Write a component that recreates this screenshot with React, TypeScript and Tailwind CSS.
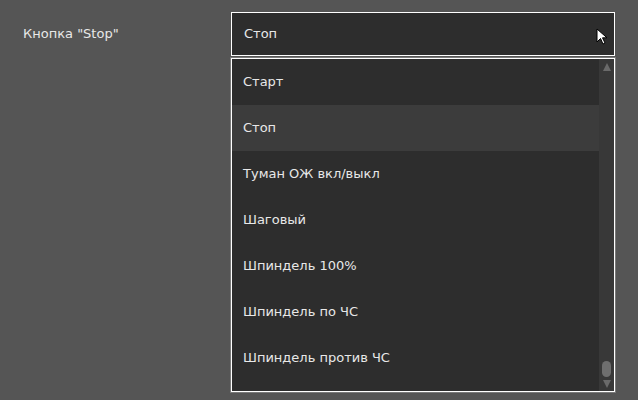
const options = [
  "Старт",
  "Стоп",
  "Туман ОЖ вкл/выкл",
  "Шаговый",
  "Шпиндель 100%",
  "Шпиндель по ЧС",
  "Шпиндель против ЧС",
];

const selected = "Стоп";

function Cursor() {
  return (
    <svg
      className="absolute left-[596px] top-[28px]"
      width="14"
      height="18"
      viewBox="0 0 14 18"
    >
      <path
        d="M1 1 L1 14 L4.5 10.5 L7 16 L9 15 L6.5 9.8 L11 9.8 Z"
        fill="#fff"
        stroke="#000"
        strokeWidth="1"
        strokeLinejoin="round"
      />
    </svg>
  );
}

export default function App() {
  return (
    <div className="relative h-[400px] w-[638px] bg-[#555555] font-['DejaVu_Sans',sans-serif] text-[13px] text-[#e8e8e8]">
      <div className="flex pt-[12px]">
        {/* label */}
        <div className="w-[231px] pl-[23px] pt-[12px] leading-[20px]">Кнопка "Stop"</div>

        <div className="flex w-[384px] flex-col">
          {/* current value */}
          <div className="flex h-[44px] items-center border border-white bg-[#2d2d2d] pl-[12px]">
            {selected}
          </div>

          {/* open list */}
          <div className="mt-[2px] flex h-[334px] border border-white bg-[#2d2d2d] shadow-[0_0_0_1px_#7a7a7a]">
            <div className="flex-1">
              {options.map((o) => (
                <div
                  key={o}
                  className={
                    "flex h-[46px] items-center pl-[11px] " +
                    (o === selected ? "bg-[#3c3c3c]" : "")
                  }
                >
                  {o}
                </div>
              ))}
            </div>
            {/* scrollbar */}
            <div className="flex w-[15px] flex-col items-center justify-between bg-[#383838] pb-[3px] pt-[4px]">
              <div className="h-0 w-0 border-x-[4px] border-b-[8px] border-x-transparent border-b-[#6a6a6a]" />
              <div className="flex flex-col items-center gap-[3px]">
                <div className="h-[16px] w-[9px] rounded-full bg-[#6e6e6e]" />
                <div className="h-0 w-0 border-x-[4px] border-t-[8px] border-x-transparent border-t-[#6a6a6a]" />
              </div>
            </div>
          </div>
        </div>
      </div>
      <Cursor />
    </div>
  );
}
